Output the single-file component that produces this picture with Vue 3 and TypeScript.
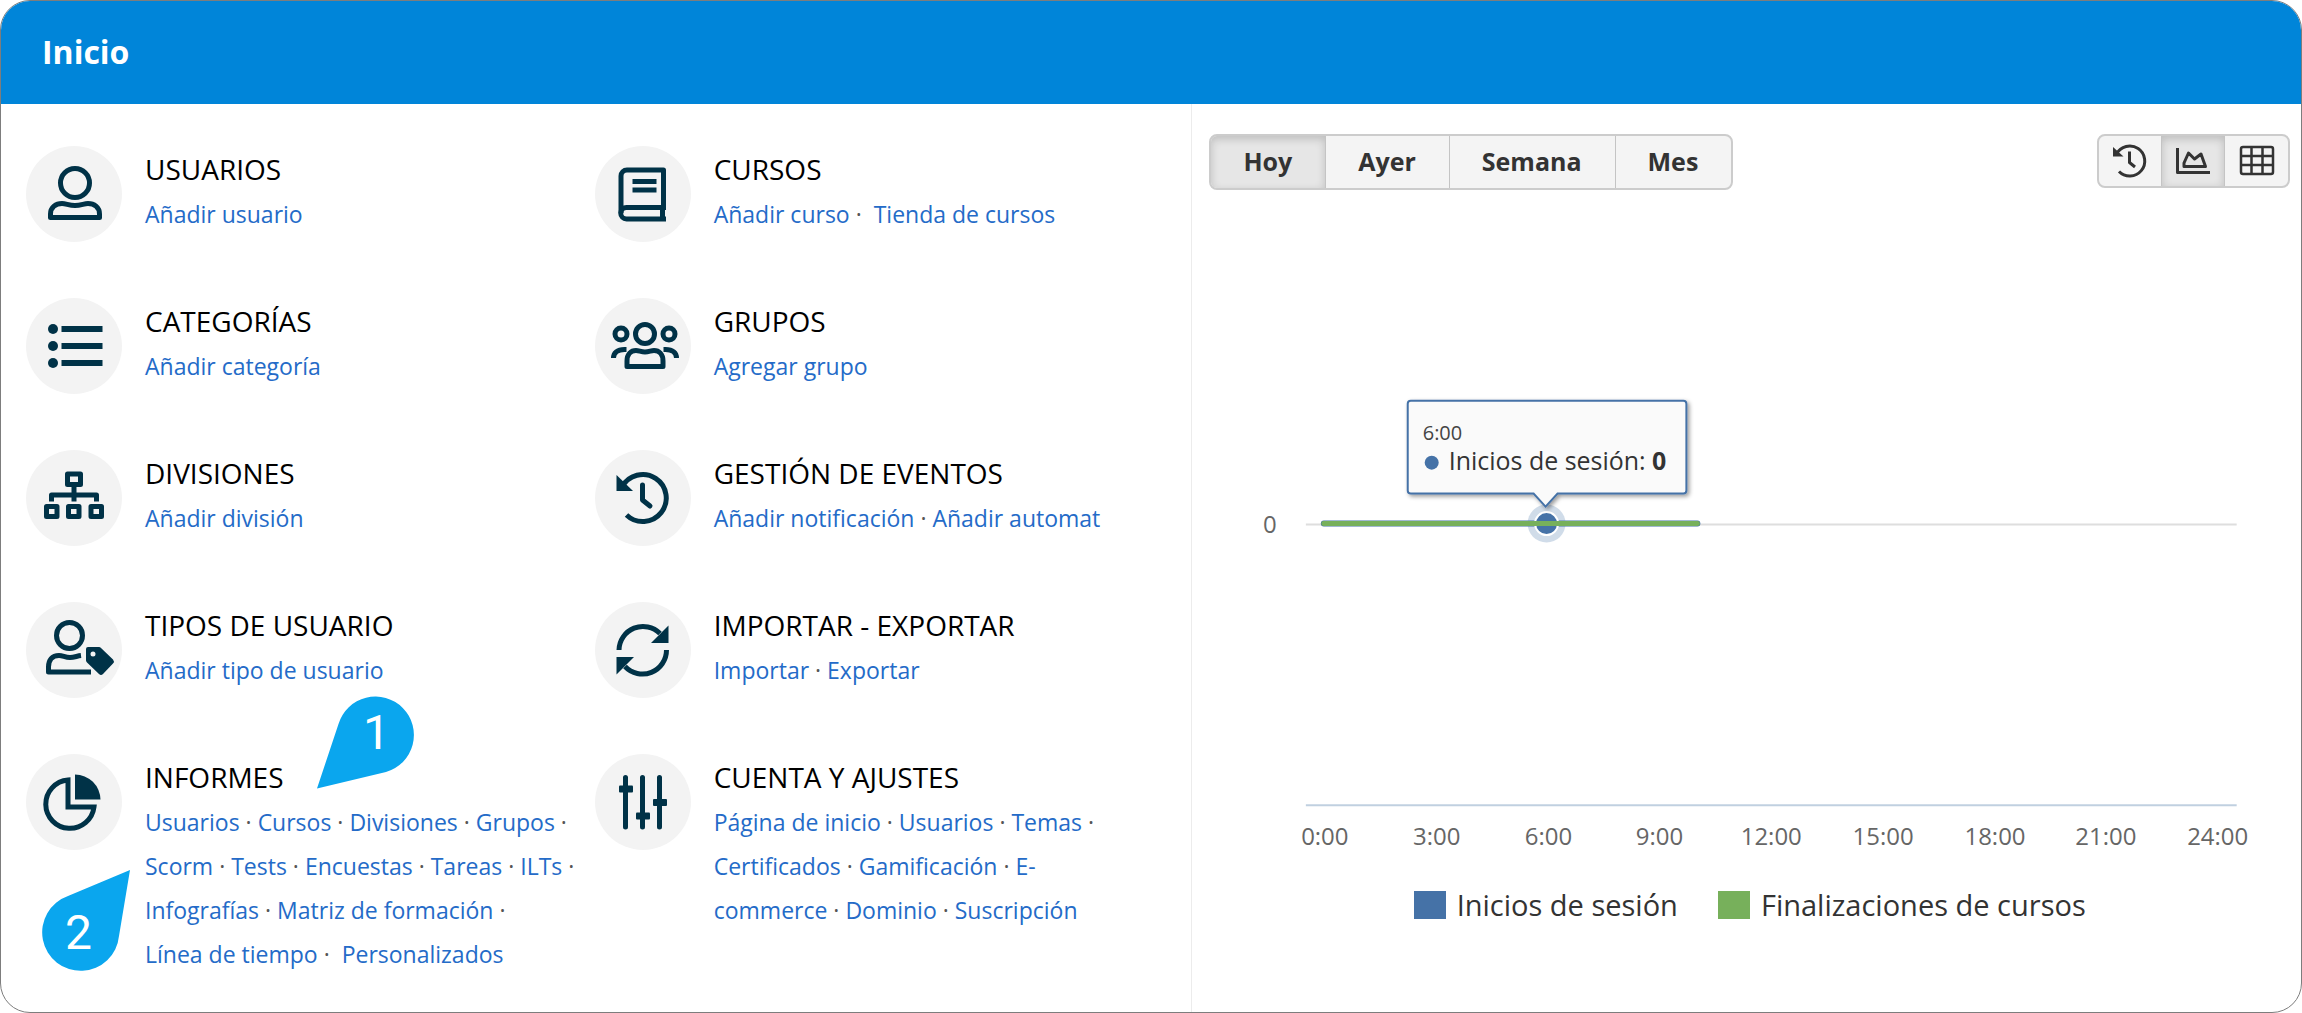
<script setup lang="ts">
import { ref } from 'vue'

interface MenuLink {
  label: string
  sep?: string
}
interface MenuItem {
  id: string
  title: string
  links: MenuLink[]
}

const DOT = ' · '
const WIDE_DOT = ' · \u00a0'

// Joins all labels with a dot; the last gap may use a wider separator.
function links(labels: string[], lastSep: string = DOT): MenuLink[] {
  const last = labels.length - 1
  return labels.map((label, i) => ({
    label,
    sep: i === last ? '' : i === last - 1 ? lastSep : DOT,
  }))
}

const items: MenuItem[] = [
  { id: 'user', title: 'USUARIOS', links: links(['Añadir usuario']) },
  { id: 'book', title: 'CURSOS', links: links(['Añadir curso', 'Tienda de cursos'], WIDE_DOT) },
  { id: 'list', title: 'CATEGORÍAS', links: links(['Añadir categoría']) },
  { id: 'group', title: 'GRUPOS', links: links(['Agregar grupo']) },
  { id: 'tree', title: 'DIVISIONES', links: links(['Añadir división']) },
  { id: 'history', title: 'GESTIÓN DE EVENTOS', links: links(['Añadir notificación', 'Añadir automat']) },
  { id: 'type', title: 'TIPOS DE USUARIO', links: links(['Añadir tipo de usuario']) },
  { id: 'sync', title: 'IMPORTAR - EXPORTAR', links: links(['Importar', 'Exportar']) },
  {
    id: 'pie',
    title: 'INFORMES',
    links: links(
      ['Usuarios', 'Cursos', 'Divisiones', 'Grupos', 'Scorm', 'Tests', 'Encuestas', 'Tareas', 'ILTs', 'Infografías', 'Matriz de formación', 'Línea\u00a0de\u00a0tiempo', 'Personalizados'],
      WIDE_DOT,
    ),
  },
  {
    id: 'sliders',
    title: 'CUENTA Y AJUSTES',
    links: links(['Página de inicio', 'Usuarios', 'Temas', 'Certificados', 'Gamificación', 'E-commerce', 'Dominio', 'Suscripción']),
  },
]

const periods = ['Hoy', 'Ayer', 'Semana', 'Mes']
const period = ref('Hoy')

const views = [
  { id: 'history', label: 'Historial' },
  { id: 'chart', label: 'Gráfico' },
  { id: 'table', label: 'Tabla' },
]
const view = ref('chart')

const ticks = [0, 3, 6, 9, 12, 15, 18, 21, 24].map((h) => ({
  label: `${h}:00`,
  x: Math.round(133 + (h / 24) * 894),
}))
</script>

<template>
  <div class="card">
    <header class="topbar"><h1>Inicio</h1></header>
    <main class="body">
      <nav class="menu" aria-label="Inicio">
        <section v-for="item in items" :key="item.id" class="item">
          <svg class="icon" viewBox="0 0 96 96" aria-hidden="true">
            <circle class="disc" cx="48" cy="48" r="48" />
            <g v-if="item.id === 'user'" class="line">
              <circle cx="49" cy="37" r="14.5" />
              <path d="M24.5 71.5V68C24.5 61 30 57.5 36 57.5C40 57.5 43 59.5 49 59.5S58 57.5 62 57.5C68 57.5 73.5 61 73.5 68V71.5Z" />
            </g>
            <g v-else-if="item.id === 'book'" class="line butt">
              <path d="M68.5 62V24H32a6 6 0 0 0-6 6V67" />
              <path d="M71 73H31.5a5.75 5.75 0 0 1 0-11.5H71M67.5 61.5V73" />
              <path d="M37.5 35.5H61.5M37.5 44H61.5" />
            </g>
            <g v-else-if="item.id === 'list'">
              <g class="solid"><circle cx="27" cy="31" r="5" /><circle cx="27" cy="48" r="5" /><circle cx="27" cy="65" r="5" /></g>
              <path class="line butt thick" d="M35.5 31H76.5M35.5 48H76.5M35.5 65H76.5" />
            </g>
            <g v-else-if="item.id === 'group'" class="line">
              <circle cx="50" cy="36" r="9.5" />
              <circle cx="26" cy="36" r="6" />
              <circle cx="74" cy="36" r="6" />
              <path d="M32 68.5V63C32 56 36 52.5 41 52.5C44 52.5 46 54 50 54S56 52.5 59 52.5C64 52.5 68 56 68 63V68.5Z" />
              <path class="butt" d="M31.5 51.5H29.5C22 51.5 18.5 55 18.5 60M68.5 51.5H70.5C78 51.5 81.5 55 81.5 60" />
            </g>
            <g v-else-if="item.id === 'tree'" class="line">
              <rect x="41.5" y="24" width="13" height="10.5" />
              <rect x="20.5" y="56.5" width="10.5" height="10" />
              <rect x="42.5" y="56.5" width="10.5" height="10" />
              <rect x="65" y="56.5" width="10.5" height="10" />
              <path class="butt" d="M48 35V51.5M25.5 51.5V45H70.5V51.5" />
            </g>
            <g v-else-if="item.id === 'history'">
              <path class="line butt" d="M27 37A23.5 23.5 0 1 1 31.5 65" />
              <path class="line" d="M47.5 35V50L55 56" />
              <path class="solid" d="M21.5 25L38 41H21.5Z" />
            </g>
            <g v-else-if="item.id === 'type'">
              <circle class="line" cx="43.5" cy="33.5" r="13" />
              <path class="line butt" d="M55 53.5C51 54 48 55.5 44 55.5C39 55.5 37 53.5 33 53.5C26 53.5 22.5 58 22.5 65V70H65" />
              <path class="solid" fill-rule="evenodd" d="M62 45H73a3 3 0 0 1 2 1L87 57.5a3 3 0 0 1 0 4L77 72a3 3 0 0 1-4 0L61 60.5a3 3 0 0 1-1-2V47a2 2 0 0 1 2-2ZM67 49.5a2.5 2.5 0 1 0 0 5a2.5 2.5 0 1 0 0-5Z" />
            </g>
            <g v-else-if="item.id === 'sync'">
              <path class="line butt" d="M24 48A24 24 0 0 1 65 31.5M71.5 48A24 24 0 0 1 30 64.5" />
              <path class="solid" d="M73.5 23.5V41H56ZM21.5 72.5V55H39Z" />
            </g>
            <g v-else-if="item.id === 'pie'">
              <path class="line pie" d="M42 26V53H68A24.2 24.2 0 1 1 42 26Z" />
              <path class="solid" d="M49 20.5A25.5 25.5 0 0 1 74.5 45.5H49Z" />
            </g>
            <g v-else>
              <path class="line" d="M30.5 23.5V73M47.5 23.5V73M64.5 23.5V73" />
              <g class="solid">
                <rect x="24" y="31.5" width="14" height="7" rx="1" />
                <rect x="41" y="58.5" width="14" height="7" rx="1" />
                <rect x="58" y="45" width="14" height="7" rx="1" />
              </g>
            </g>
          </svg>
          <div class="text">
            <h2>{{ item.title }}</h2>
            <p><template v-for="l in item.links" :key="l.label"><a href="#">{{ l.label }}</a>{{ l.sep }}</template></p>
          </div>
          <template v-if="item.id === 'pie'">
            <div class="pin first">
              <svg viewBox="0 0 98 94" aria-hidden="true"><path d="M0 93.5L21.5 29A38.5 38.5 0 1 1 69 77Z" /></svg>
              <span>1</span>
            </div>
            <div class="pin second">
              <svg viewBox="0 0 88 101" aria-hidden="true"><path d="M88 0L77 66A38.5 38.5 0 1 1 26 26Z" /></svg>
              <span>2</span>
            </div>
          </template>
        </section>
      </nav>

      <section class="stats" aria-label="Actividad">
        <div class="toolbar">
          <div class="btns">
            <button v-for="p in periods" :key="p" type="button" :class="{ on: p === period }" @click="period = p">{{ p }}</button>
          </div>
          <div class="btns views">
            <button v-for="v in views" :key="v.id" type="button" :aria-label="v.label" :class="{ on: v.id === view }" @click="view = v.id">
              <svg viewBox="0 0 36 36" aria-hidden="true">
                <g v-if="v.id === 'history'">
                  <path d="M4.5 11A15 15 0 1 1 7 28.5" />
                  <path d="M17.5 8.5V19.5L23 24" />
                  <path class="fill" d="M1 4L11.5 13.5H1Z" />
                </g>
                <g v-else-if="v.id === 'chart'">
                  <path d="M2.5 5V29.5H35" />
                  <path d="M9 23.5V20L13.5 10L19.5 16L26 11L30.5 23.5Z" />
                </g>
                <g v-else class="thin">
                  <rect x="2" y="4" width="32" height="27" rx="2" />
                  <path d="M2 13H34M2 22H34M12.5 4V31M23.5 4V31" />
                </g>
              </svg>
            </button>
          </div>
        </div>

        <svg class="chart" viewBox="0 0 1110 680" role="img" aria-label="Inicios de sesión">
          <defs>
            <filter id="tipShadow" x="-10%" y="-20%" width="120%" height="150%">
              <feDropShadow dx="2" dy="2" stdDeviation="2" flood-color="#000" flood-opacity="0.4" />
            </filter>
          </defs>
          <path class="grid" d="M114 335H1046" />
          <path class="axis" d="M114 616H1046" />
          <circle class="halo" cx="355" cy="334" r="19" />
          <path class="s1" d="M132 334H506" />
          <circle class="dot" cx="355" cy="334" r="11.5" />
          <path class="s2" d="M132 334H506" />
          <path class="tip" filter="url(#tipShadow)" d="M219 211H492a3 3 0 0 1 3 3V301a3 3 0 0 1-3 3H366L354 317L342 304H219a3 3 0 0 1-3-3V214a3 3 0 0 1 3-3Z" />
          <text class="tiphead" x="231" y="250">6:00</text>
          <circle class="blue" cx="240" cy="273" r="7" />
          <text class="tiptext" x="257" y="280">Inicios de sesión: <tspan>0</tspan></text>
          <text class="lab" x="78" y="343" text-anchor="middle">0</text>
          <text v-for="t in ticks" :key="t.label" class="lab" :x="t.x" y="656" text-anchor="middle">{{ t.label }}</text>
        </svg>

        <ul class="legend">
          <li><i class="sw one"></i>Inicios de sesión</li>
          <li><i class="sw two"></i>Finalizaciones de cursos</li>
        </ul>
      </section>
    </main>
  </div>
</template>

<style>
body {
  margin: 0;
  background: #fff;
}
</style>

<style scoped>
.card {
  box-sizing: border-box;
  min-height: 100vh;
  display: flex;
  flex-direction: column;
  border: 1px solid #7d7d7d;
  border-radius: 30px;
  overflow: hidden;
  background: #fff;
  font-family: "Open Sans", "Noto Sans", sans-serif;
}
.topbar {
  display: flex;
  align-items: center;
  height: 103px;
  padding: 0 41px;
  background: #0085d9;
}
h1 {
  margin: 0 0 2px;
  color: #fff;
  font-size: 32px;
  font-weight: 700;
  line-height: 40px;
}
.body {
  flex: 1;
  display: flex;
}
.menu {
  flex: none;
  width: 51.8%;
  box-sizing: border-box;
  display: grid;
  grid-template-columns: 1fr 1fr;
  grid-auto-rows: minmax(152px, auto);
  align-content: start;
  padding: 42px 28px 0 25px;
  border-right: 1px solid #ececec;
}
.item {
  position: relative;
  display: flex;
  align-items: flex-start;
  gap: 23px;
}
.icon {
  flex: none;
  width: 96px;
  height: 96px;
}
.disc {
  fill: #f3f3f3;
}
.line {
  fill: none;
  stroke: #003247;
  stroke-width: 5;
  stroke-linejoin: round;
  stroke-linecap: round;
}
.butt {
  stroke-linecap: butt;
}
.thick {
  stroke-width: 6;
}
.pie {
  stroke-linejoin: miter;
}
.solid {
  fill: #003247;
}
.text {
  flex: 1;
  min-width: 0;
  padding: 5px 20px 0 0;
}
h2 {
  margin: 0 0 5px;
  color: #000;
  font-size: 28px;
  font-weight: 500;
  line-height: 36px;
}
p {
  margin: 0;
  color: #555;
  font-size: 23px;
  line-height: 44px;
}
a {
  color: #246bc8;
  text-decoration: none;
}
.pin {
  position: absolute;
  color: #fff;
  font-family: Roboto, sans-serif;
  font-size: 48px;
  line-height: 56px;
}
.pin svg {
  display: block;
  width: 100%;
  fill: #0aa6ee;
}
.pin span {
  position: absolute;
}
.first {
  left: 291px;
  top: -59px;
  width: 98px;
}
.first span {
  left: 46px;
  top: 10px;
}
.second {
  left: 16px;
  top: 116px;
  width: 88px;
}
.second span {
  left: 23px;
  top: 35px;
}
.stats {
  flex: 1;
  min-width: 0;
}
.toolbar {
  display: flex;
  justify-content: space-between;
  align-items: flex-start;
  padding: 30px 11px 0 17px;
}
.btns {
  display: flex;
  border: 2px solid #ccc;
  border-radius: 8px;
  background: #f4f4f4;
  overflow: hidden;
}
button {
  height: 52px;
  padding: 0 33px 2px 32px;
  border: 0;
  border-right: 1px solid #c4c4c4;
  background: transparent;
  color: #333;
  font-family: inherit;
  font-size: 25px;
  font-weight: 700;
}
button:last-child {
  border-right: 0;
}
.on {
  background: #e6e6e6;
  box-shadow: inset 0 3px 8px rgba(0, 0, 0, 0.18);
}
.views button {
  display: flex;
  align-items: center;
  justify-content: center;
  width: 63px;
  height: 50px;
  padding: 0;
}
.views svg {
  width: 36px;
  height: 36px;
  fill: none;
  stroke: #333;
  stroke-width: 3;
  stroke-linejoin: round;
}
.views .fill {
  fill: #333;
  stroke: none;
}
.views .thin {
  stroke-width: 2.5;
}
.chart {
  display: block;
  width: 100%;
}
.grid {
  stroke: #dedede;
  stroke-width: 2;
}
.axis {
  stroke: #c0d0e0;
  stroke-width: 2;
}
.halo {
  fill: #4572a7;
  fill-opacity: 0.25;
}
.dot {
  fill: #4572a7;
  stroke: #fff;
  stroke-width: 2;
}
.s1 {
  stroke: #4572a7;
  stroke-width: 6;
  stroke-linecap: round;
}
.s2 {
  stroke: #77b05b;
  stroke-width: 5;
  stroke-linecap: round;
}
.blue {
  fill: #4572a7;
}
.tip {
  fill: #fafafa;
  stroke: #4572a7;
  stroke-width: 2;
}
.lab {
  fill: #666;
  font-size: 24px;
}
.tiphead {
  fill: #444;
  font-size: 20px;
}
.tiptext {
  fill: #333;
  font-size: 25px;
}
.tiptext tspan {
  font-weight: 700;
}
.legend {
  display: flex;
  justify-content: center;
  gap: 40px;
  margin: 16px 0 0;
  padding: 0 0 0 6px;
  list-style: none;
  color: #333;
  font-size: 29px;
  line-height: 40px;
}
.legend li {
  display: flex;
  align-items: center;
  gap: 11px;
}
.sw {
  width: 32px;
  height: 28px;
}
.one {
  background: #4572a7;
}
.two {
  background: #77b05b;
}
</style>
